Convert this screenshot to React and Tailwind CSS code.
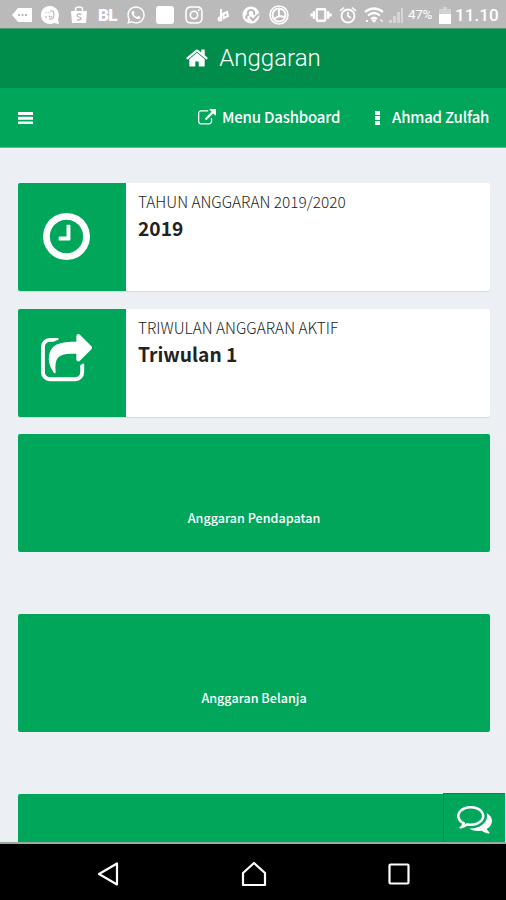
import { FaInstagram, FaWhatsapp } from 'react-icons/fa';

function Glyph({ d, className, viewBox = '0 0 1792 1792' }) {
  return (
    <svg viewBox={viewBox} fill="currentColor" className={`block shrink-0 ${className}`}>
      <path d={d} />
    </svg>
  );
}

const paths = {
  home: 'M1472 992v480q0 26-19 45t-45 19h-384v-384h-256v384h-384q-26 0-45-19t-19-45v-480q0-1 .5-3t.5-3l575-474 575 474q1 2 1 6zm223-69l-62 74q-8 9-21 11h-3q-13 0-21-7l-692-577-692 577q-12 8-24 7-13-2-21-11l-62-74q-8-10-7-23.5t11-21.5l719-599q32-26 76-26t76 26l244 204v-195q0-14 9-23t23-9h192q14 0 23 9t9 23v408l219 182q10 8 11 21.5t-7 23.5z',
  external:
    'M1408 928v320q0 119-84.5 203.5t-203.5 84.5h-832q-119 0-203.5-84.5t-84.5-203.5v-832q0-119 84.5-203.5t203.5-84.5h704q14 0 23 9t9 23v64q0 14-9 23t-23 9h-704q-66 0-113 47t-47 113v832q0 66 47 113t113 47h832q66 0 113-47t47-113v-320q0-14 9-23t23-9h64q14 0 23 9t9 23zm384-864v512q0 26-19 45t-45 19-45-19l-176-176-652 652q-10 10-23 10t-23-10l-114-114q-10-10-10-23t10-23l652-652-176-176q-19-19-19-45t19-45 45-19h512q26 0 45 19t19 45z',
  clock:
    'M1024 544v448q0 14-9 23t-23 9h-320q-14 0-23-9t-9-23v-64q0-14 9-23t23-9h224v-352q0-14 9-23t23-9h64q14 0 23 9t9 23zm416 352q0-148-73-273t-198-198-273-73-273 73-198 198-73 273 73 273 198 198 273 73 273-73 198-198 73-273zm224 0q0 209-103 385.5t-279.5 279.5-385.5 103-385.5-103-279.5-279.5-103-385.5 103-385.5 279.5-279.5 385.5-103 385.5 103 279.5 279.5 103 385.5z',
  share:
    'M1472 989v259q0 119-84.5 203.5t-203.5 84.5h-832q-119 0-203.5-84.5t-84.5-203.5v-832q0-119 84.5-203.5t203.5-84.5h255q13 0 22.5 9.5t9.5 22.5q0 27-26 32-77 26-133 60-10 4-16 4h-112q-66 0-113 47t-47 113v832q0 66 47 113t113 47h832q66 0 113-47t47-113v-214q0-19 18-29 28-13 54-37 16-16 35-8 21 9 21 29zm237-496l-384 384q-18 19-45 19-12 0-25-5-39-17-39-59v-192h-160q-323 0-438 131-119 137-74 473 3 23-20 34-8 2-12 2-16 0-26-13-10-14-21-31t-39.5-68.5-49.5-99.5-38.5-114-17.5-122q0-49 3.5-91t14-90 28-88 47-81.5 68.5-74 94.5-61.5 124.5-48.5 159.5-30.5 196.5-11h160v-192q0-42 39-59 13-5 25-5 26 0 45 19l384 384q19 19 19 45t-19 45z',
  comments:
    'M704 384q-153 0-286 52t-211.5 141-78.5 191q0 82 53 158t149 132l97 56-35 84q34-20 62-39l44-31 53 10q78 14 153 14 153 0 286-52t211.5-141 78.5-191-78.5-191-211.5-141-286-52zm0-128q191 0 353.5 68.5t256.5 186.5 94 257-94 257-256.5 186.5-353.5 68.5q-86 0-176-16-124 88-278 128-36 9-86 16h-3q-11 0-20.5-8t-11.5-21q-1-3-1-6.5t.5-6.5 2-6l2.5-5 3.5-5.5 4-5 4.5-5 4-4.5q5-6 23-25t26-29.5 22.5-29 25-38.5 20.5-44q-124-72-195-177t-71-224q0-139 94-257t256.5-186.5 353.5-68.5zm822 1169q10 24 20.5 44t25 38.5 22.5 29 26 29.5 23 25q1 1 4 4.5t4.5 5 4 5 3.5 5.5l2.5 5 2 6 .5 6.5-1 6.5q-3 14-13 22t-22 7q-50-7-86-16-154-40-278-128-90 16-176 16-271 0-472-132 58 4 88 4 161 0 309-45t264-129q125-92 192-212t67-254q0-77-23-152 129 71 204 178t75 230q0 120-71 224.5t-195 176.5z',
};

function StatusBar() {
  return (
    <div className="flex h-7 shrink-0 items-center bg-[#bababa] pt-0.5 pl-3 text-white">
      <svg viewBox="0 0 20 16" className="h-4 w-5 shrink-0">
        <path d="M0 8 6 1h14v14H6z" fill="currentColor" />
        <path d="M6 8h2m1.500 0h2m1.500 0h2" stroke="#bababa" strokeWidth="2" />
      </svg>
      <svg viewBox="0 0 18 18" className="ml-[9px] h-[18px] w-[18px] shrink-0">
        <path d="M9 0a9 9 0 0 1 8 13l1 5-5-1A9 9 0 1 1 9 0z" fill="currentColor" />
        <path d="M5 6v1m0 3v2m3-6v1m0 3q2 2 3 0M9 5q4-1 4 4t-5 4" stroke="#bababa" strokeWidth="1.200" fill="none" />
      </svg>
      <svg viewBox="0 0 18 18" className="ml-[11px] h-[18px] w-[18px] shrink-0" fill="none">
        <path d="M1 5h16l-1 12H2z" fill="currentColor" />
        <path d="M5.500 6V3q0-2 3.500-2t3.500 2v3" stroke="currentColor" strokeWidth="1.500" />
        <path d="M11.500 8.500Q9 7 7.500 8.500T9 11t2 2-4 1" stroke="#bababa" strokeWidth="1.300" />
      </svg>
      <span className="ml-2.5 w-[19px] font-['Roboto'] text-[17px] leading-none font-black tracking-[-0.8px]">BL</span>
      <FaWhatsapp className="ml-[9px] size-5 shrink-0" />
      <span className="ml-2.5 size-[18px] shrink-0 rounded-[3px] bg-white" />
      <FaInstagram className="ml-2.5 size-5 shrink-0" />
      <svg viewBox="0 0 16 18" className="ml-3 h-[18px] w-4 shrink-0" fill="none" stroke="currentColor">
        <path d="M5 3v9" strokeWidth="2" />
        <circle cx="4" cy="13" r="1.500" strokeWidth="2" />
        <path d="m7 8 4-2 1 4-4 2z" strokeWidth="2" />
      </svg>
      <svg viewBox="0 0 18 18" className="ml-2.5 size-[18px] shrink-0" fill="none">
        <circle cx="9" cy="9" r="8.500" fill="currentColor" />
        <path d="M5 13q-2-3 1-4-1-5 3-5t3 5M8 11l3 3 6-6" stroke="#bababa" strokeWidth="2" />
      </svg>
      <svg viewBox="0 0 20 20" className="ml-[9px] size-5 shrink-0" fill="none" stroke="currentColor">
        <circle cx="10" cy="10" r="9" strokeWidth="1.600" />
        <circle cx="10" cy="10" r="6.500" strokeWidth="2" />
        <path d="M10 4v7l-5 3m5-3 6 1" strokeWidth="1.800" />
      </svg>
      <svg viewBox="0 0 23 18" className="ml-[21px] h-[18px] w-[22px] shrink-0" fill="none" stroke="currentColor" strokeWidth="2.400">
        <rect x="7" y="3" width="9" height="12" rx="1" />
        <path d="M4 5v8M19 5v8M1.500 7.500v3M21.500 7.500v3" />
      </svg>
      <svg viewBox="0 0 18 18" className="ml-[7px] size-[18px] shrink-0" fill="none" stroke="currentColor">
        <circle cx="9" cy="10" r="6.500" strokeWidth="1.800" />
        <path d="M9 6v4l3 2M1 5l4-3.500M17 5l-4-3.500" strokeWidth="1.600" />
      </svg>
      <svg viewBox="0 0 20 18" className="ml-[7px] h-[18px] w-5 shrink-0" fill="none" stroke="currentColor" strokeWidth="2.200">
        <path d="M1 6q9-7 18 0M4 9.500q6-5 12 0M7 13q3-2.500 6 0" />
        <path d="m8 14 2 2.500 2-2.500z" fill="currentColor" strokeWidth="1" />
        <path d="m2 14 2 2m0-2-2 2M16 14h2v2" strokeWidth="1" />
      </svg>
      <svg viewBox="0 0 14 16" className="ml-[5px] h-4 w-3.5 shrink-0 opacity-40" fill="currentColor">
        <path d="M0 13h3v3H0zM4 9h3v7H4zM8 5h3v11H8zM12 1h2v15h-2z" />
      </svg>
      <span className="ml-[5px] w-[27px] font-['Roboto'] text-[13.500px] leading-none tracking-[-0.300px]">47%</span>
      <svg viewBox="0 0 12 17" className="ml-1 h-[17px] w-3 shrink-0" fill="currentColor">
        <path d="M4 0h4v2h4v6H0V2h4z" opacity=".35" />
        <path d="M0 7h12v10H0z" />
      </svg>
      <span className="ml-1 font-['Roboto'] text-[17px] leading-none font-medium tracking-[0.100px]">11.10</span>
    </div>
  );
}

function InfoBox({ icon, iconClass, label, value }) {
  return (
    <div className="flex h-[108px] overflow-hidden rounded-[2px] bg-white shadow-[0_1px_1px_rgba(0,0,0,0.1)]">
      <div className="w-[108px] shrink-0 bg-[#00a65a] text-white">
        <Glyph d={paths[icon]} className={iconClass} />
      </div>
      <div className="pt-[7px] pl-3 text-[#222]">
        <div className="h-[22px] text-[15.400px] leading-[22px] font-light whitespace-nowrap">{label}</div>
        <div className="pt-0.5 text-[19.200px] leading-7 font-bold">{value}</div>
      </div>
    </div>
  );
}

function Tile({ children }) {
  return (
    <div className="flex h-[118px] shrink-0 items-end justify-center rounded-[2px] bg-[#00a65a] pb-[23px] text-[12.600px] leading-[22px] font-medium text-white">
      {children}
    </div>
  );
}

export default function App() {
  return (
    <div className="flex h-[900px] w-[506px] flex-col overflow-hidden bg-[#ecf0f5] font-['Noto_Sans_CJK_SC','Noto_Sans',sans-serif]">
      <StatusBar />
      <header className="flex h-[60px] shrink-0 items-center justify-center gap-2.5 border-t border-[#4c9f72] bg-[#008d4c] text-white">
        <Glyph d={paths.home} className="size-6 -translate-y-px" />
        <h1 className="-translate-y-px font-['Roboto'] text-[24px] leading-none font-light">Anggaran</h1>
      </header>
      <nav className="flex h-[60px] shrink-0 items-center border-b border-[#62bd8d] bg-[#00a65a] pl-[18px] text-[15px] font-medium tracking-[-0.200px] text-white">
        <svg viewBox="0 0 15 12" className="h-3 w-[15px]" fill="currentColor">
          <path d="M0 0h15v3H0zM0 4.700h15v3H0zM0 9.400h15v3H0z" />
        </svg>
        <Glyph d={paths.external} className="ml-[165px] size-[18px]" />
        <span className="ml-1.5 w-[119px] whitespace-nowrap">Menu Dashboard</span>
        <svg viewBox="0 0 5 14" className="ml-[34px] h-3.5 w-[5px]" fill="currentColor">
          <path d="M0 0h5v4H0zM0 5h5v4H0zM0 10h5v4H0z" />
        </svg>
        <span className="ml-3 whitespace-nowrap">Ahmad Zulfah</span>
      </nav>
      <main className="relative flex h-[694px] shrink-0 flex-col overflow-hidden px-[18px] pr-4 pt-[35px]">
        <div className="flex flex-col gap-[18px]">
          <InfoBox icon="clock" iconClass="mt-[26px] ml-[21px] size-[55px]" label="TAHUN ANGGARAN 2019/2020" value="2019" />
          <InfoBox icon="share" iconClass="mt-[25px] ml-[21px] size-[55px]" label="TRIWULAN ANGGARAN AKTIF" value="Triwulan 1" />
        </div>
        <div className="mt-[17px] flex flex-col gap-[62px]">
          <Tile>Anggaran Pendapatan</Tile>
          <Tile>Anggaran Belanja</Tile>
          <Tile />
        </div>
        <button className="absolute right-px bottom-0 flex h-[49px] w-[62px] items-center justify-center border-t border-l border-[#008d4c] bg-[#00a65a] text-white">
          <Glyph d={paths.comments} className="size-[35px]" />
        </button>
      </main>
      <div className="flex h-[58px] shrink-0 items-center justify-between border-t-2 border-[#9aaba2] bg-black pt-1 pr-24 pl-[97px] text-white">
        <svg viewBox="0 0 22 24" className="h-6 w-[22px]" fill="none" stroke="currentColor" strokeWidth="2.200" strokeLinejoin="round">
          <path d="M20 1.500v21L2 12z" />
        </svg>
        <svg viewBox="0 0 26 26" className="size-[26px]" fill="none" stroke="currentColor" strokeWidth="2.200" strokeLinejoin="round">
          <path d="M13 2 24 12v12H2V12z" />
        </svg>
        <svg viewBox="0 0 22 22" className="size-[22px]" fill="none" stroke="currentColor" strokeWidth="2.200">
          <rect x="1.500" y="1.500" width="19" height="19" rx="1" />
        </svg>
      </div>
    </div>
  );
}
